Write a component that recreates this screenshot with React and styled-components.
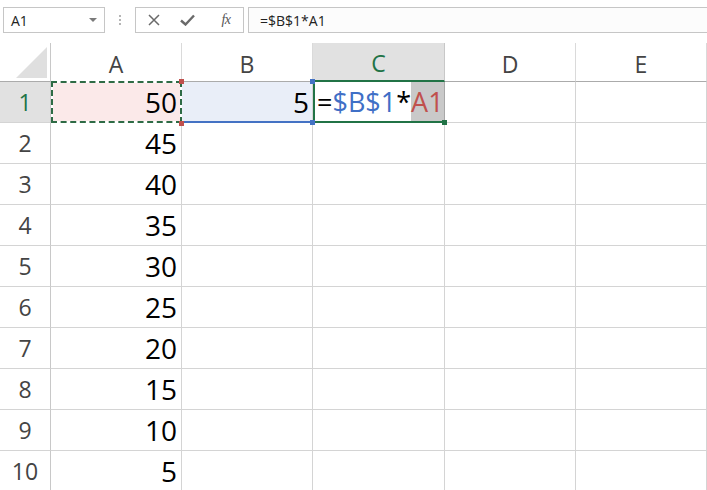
import React from "react";
import styled, { createGlobalStyle } from "styled-components";

const Global = createGlobalStyle`
  html, body { margin: 0; padding: 0; background: #fff; overflow: hidden; }
  body { font-family: "Open Sans", "Noto Sans", sans-serif; }
`;

const GREEN = "#217346";
const HEAD_TEXT = "#444";
const GRID = "#d4d4d4";

const Page = styled.div`
  width: 707px;
  height: 490px;
  display: flex;
  flex-direction: column;
  overflow: hidden;
`;

const FormulaBar = styled.div`
  flex-shrink: 0;
  height: 43px;
  box-sizing: border-box;
  padding: 7px 0 10px 3px;
  display: flex;
  align-items: stretch;
`;

const NameBox = styled.div`
  width: 102px;
  box-sizing: border-box;
  border: 1px solid #c6c6c6;
  background: #fff;
  display: flex;
  align-items: center;
  justify-content: space-between;
  padding: 0 7px 0 7px;
  font-size: 14px;
  color: #222;
`;

const DropArrow = styled.span`
  width: 0;
  height: 0;
  border-left: 4px solid transparent;
  border-right: 4px solid transparent;
  border-top: 4px solid #7a7a7a;
`;

const Grip = styled.div`
  width: 30px;
  display: flex;
  flex-direction: column;
  align-items: center;
  justify-content: center;
  gap: 2px;
  & > span {
    width: 2px;
    height: 2px;
    background: #b5b5b5;
  }
`;

const ButtonGroup = styled.div`
  width: 109px;
  box-sizing: border-box;
  border: 1px solid #c6c6c6;
  background: #fff;
  display: flex;
  align-items: center;
  padding-left: 9px;
`;

const IconButton = styled.div`
  width: ${(p) => p.$w}px;
  display: flex;
  align-items: center;
  justify-content: center;
  color: #6a6a6a;
`;

const Fx = styled.span`
  font-family: "Liberation Serif", "DejaVu Serif", serif;
  font-style: italic;
  font-size: 14px;
  color: #555;
  letter-spacing: -0.5px;
`;

const FormulaInput = styled.div`
  flex: 1;
  margin-left: 4px;
  border: 1px solid #c6c6c6;
  border-right: none;
  background: #fcfcfc;
  display: flex;
  align-items: center;
  padding-left: 11px;
  font-size: 14px;
  color: #222;
`;

const Sheet = styled.div`
  flex-shrink: 0;
  display: grid;
  grid-template-columns: 51px 131px 131px 132px 131px 131px;
  grid-template-rows: 39px repeat(10, 41px);
`;

const Corner = styled.div`
  box-sizing: border-box;
  border-right: 1px solid #c8c8c8;
  border-bottom: 1px solid #ababab;
  display: flex;
  align-items: flex-end;
  justify-content: flex-end;
  padding: 0 3px 3px 0;
`;

const Triangle = styled.div`
  width: 0;
  height: 0;
  border-left: 31px solid transparent;
  border-bottom: 31px solid #dfdfdf;
`;

const ColHead = styled.div`
  box-sizing: border-box;
  border-right: 1px solid ${(p) => (p.$sel ? "#c8c8c8" : "#dadada")};
  border-bottom: ${(p) => (p.$sel ? `2px solid ${GREEN}` : "1px solid #ababab")};
  background: ${(p) => (p.$sel ? "#e1e1e1" : "#fff")};
  color: ${(p) => (p.$sel ? GREEN : HEAD_TEXT)};
  font-size: 23px;
  display: flex;
  align-items: center;
  justify-content: center;
  padding-top: 3px;
`;

const RowHead = styled.div`
  box-sizing: border-box;
  border-right: 1px solid #c8c8c8;
  border-bottom: 1px solid ${GRID};
  background: ${(p) => (p.$sel ? "#e1e1e1" : "#fff")};
  color: ${(p) => (p.$sel ? GREEN : HEAD_TEXT)};
  font-size: 23px;
  display: flex;
  align-items: center;
  justify-content: center;
`;

const Cell = styled.div`
  box-sizing: border-box;
  position: relative;
  border-right: 1px solid ${GRID};
  border-bottom: 1px solid ${GRID};
  background: ${(p) => p.$bg || "#fff"};
  font-size: 28px;
  color: #000;
  display: flex;
  align-items: center;
  justify-content: flex-end;
  padding-right: 4px;
`;

const RefCell = styled(Cell)`
  border-bottom: 2px solid #4472c4;
  padding-right: 3px;
`;

const EditCell = styled.div`
  box-sizing: border-box;
  position: relative;
  border-left: 2px solid ${GREEN};
  border-bottom: 2px solid ${GREEN};
  border-right: 1px solid #a8a8a8;
  background: #fff;
  font-size: 27px;
  display: flex;
  align-items: center;
  padding-left: 2px;
  white-space: nowrap;
`;

const Marquee = styled.div`
  position: absolute;
  left: 0;
  top: -1px;
  right: -1px;
  bottom: -1px;
  border: 2px dashed #2e6b45;
  pointer-events: none;
`;

const MarqueeBack = styled.div`
  position: absolute;
  left: 0;
  top: -1px;
  right: -1px;
  bottom: -1px;
  border: 2px solid #fff;
  pointer-events: none;
`;

const Handle = styled.span`
  position: absolute;
  width: 5px;
  height: 5px;
  background: ${(p) => p.$c};
  z-index: 3;
  ${(p) => (p.$top ? "top: -3px;" : "bottom: -4px;")}
  right: -3px;
`;

const Tok = styled.span`
  color: ${(p) => p.$c || "#000"};
  background: ${(p) => p.$hl || "transparent"};
  align-self: stretch;
  display: flex;
  align-items: center;
`;

const values = [50, 45, 40, 35, 30, 25, 20, 15, 10, 5];
const cols = ["A", "B", "C", "D", "E"];

export default function App() {
  return (
    <Page>
      <Global />
      <FormulaBar>
        <NameBox>
          <span>A1</span>
          <DropArrow />
        </NameBox>
        <Grip>
          <span />
          <span />
          <span />
        </Grip>
        <ButtonGroup>
          <IconButton $w={18}>
            <svg width="12" height="12" viewBox="0 0 12 12">
              <path d="M1 1 L11 11 M11 1 L1 11" stroke="#6a6a6a" strokeWidth="1.5" />
            </svg>
          </IconButton>
          <IconButton $w={48}>
            <svg width="15" height="12" viewBox="0 0 15 12">
              <path d="M1 6.5 L5.5 10.5 L14 1.5" stroke="#6a6a6a" strokeWidth="2.4" fill="none" />
            </svg>
          </IconButton>
          <IconButton $w={30}>
            <Fx>fx</Fx>
          </IconButton>
        </ButtonGroup>
        <FormulaInput>=$B$1*A1</FormulaInput>
      </FormulaBar>
      <Sheet>
        <Corner>
          <Triangle />
        </Corner>
        {cols.map((c) => (
          <ColHead key={c} $sel={c === "C"}>
            {c}
          </ColHead>
        ))}
        {values.map((v, i) => (
          <React.Fragment key={i}>
            <RowHead $sel={i === 0}>{i + 1}</RowHead>
            {i === 0 ? (
              <>
                <Cell $bg="#fbe9e9">
                  50
                  <MarqueeBack />
                  <Marquee />
                  <Handle $c="#c0504d" $top />
                  <Handle $c="#c0504d" />
                </Cell>
                <RefCell $bg="#e9eef8">
                  5
                  <Handle $c="#4472c4" $top />
                  <Handle $c="#4472c4" />
                </RefCell>
                <EditCell>
                  <Tok>=</Tok>
                  <Tok $c="#3f6fc6">$B$1</Tok>
                  <Tok>*</Tok>
                  <Tok $c="#c0504d" $hl="#c9c9c9">A1</Tok>
                  <Handle $c={GREEN} />
                </EditCell>
                <Cell />
                <Cell />
              </>
            ) : (
              <>
                <Cell>{v}</Cell>
                <Cell />
                <Cell />
                <Cell />
                <Cell />
              </>
            )}
          </React.Fragment>
        ))}
      </Sheet>
    </Page>
  );
}
